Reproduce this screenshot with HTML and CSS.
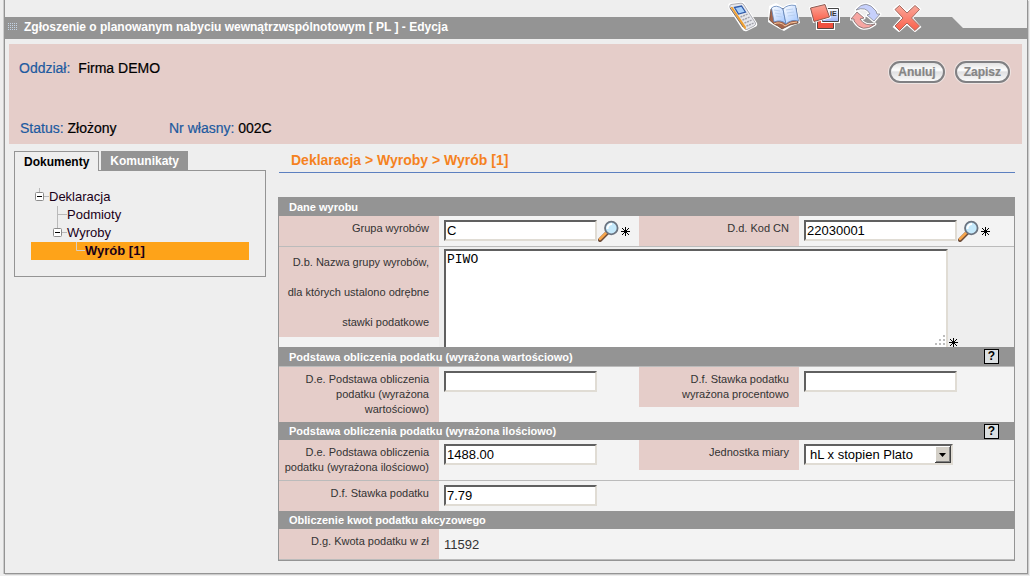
FILE: index.html
```html
<!DOCTYPE html>
<html lang="pl">
<head>
<meta charset="utf-8">
<title>Zgłoszenie o planowanym nabyciu wewnątrzwspólnotowym</title>
<link rel="stylesheet" href="styles.css">
</head>
<body>
<svg class="defs" aria-hidden="true">
  <defs>
    <linearGradient id="red" x1="0" y1="0" x2="0" y2="1"><stop offset="0" stop-color="#f9a79a"/><stop offset="1" stop-color="#fb5f4a"/></linearGradient>
    <linearGradient id="blue" x1="0" y1="0" x2="0" y2="1"><stop offset="0" stop-color="#fff"/><stop offset="1" stop-color="#9db2f6"/></linearGradient>
    <linearGradient id="page" x1="0" y1="0" x2="1" y2="1"><stop offset="0" stop-color="#fff"/><stop offset="1" stop-color="#9fc4ff"/></linearGradient>
    <symbol id="lens" viewBox="0 0 22 22">
      <path d="M9 13 L2 20" stroke="#6a4a38" stroke-width="4" stroke-linecap="round"/>
      <path d="M8 13 L2 19" stroke="#f6a54c" stroke-width="2.5" stroke-linecap="round"/>
      <circle cx="13.300" cy="8" r="6.300" fill="#c5e9fb" stroke="#6c7480" stroke-width="1.800"/>
      <path d="M9.500 9 A4.500 4.500 0 0 1 14 4" fill="none" stroke="#fff" stroke-width="2"/>
    </symbol>
    <symbol id="star" viewBox="0 0 9 9">
      <path d="M4.500 0V9M0 4.500H9M1 1L8 8M8 1L1 8" stroke="#000" stroke-width="1"/>
    </symbol>
  </defs>
</svg>
<div class="window">
  <header class="titlebar">
    <svg class="grip" viewBox="0 0 10 8" aria-hidden="true"><path d="M0 .5H10M0 2.500H10M0 4.500H10M0 6.500H10" stroke="#c3d3e4" stroke-dasharray="1 1"/></svg>
    <h1 class="title">Zgłoszenie o planowanym nabyciu wewnątrzwspólnotowym [ PL ] - Edycja</h1>
    <nav class="tools">
      <button class="tool" type="button" aria-label="Telefon"><svg viewBox="0 0 32 32">
        <path d="M3 3 L14 2 Q17 1 18 4 L30 23 Q31 26 28 27 L20 31 Q17 32 15 29 L2 9 Q0 4 3 3Z" fill="#fff"/>
        <path d="M4 4.500 L14 3.200 Q16 3 17 5 L28.500 23 Q29 25 27 26 L20 29.500 Q18 30 17 28 L3 8 Q2 5 4 4.500Z" fill="#e6e7ec" stroke="#9b9ba2" stroke-width=".8"/>
        <path d="M3.500 7 L5.500 7 L19 27 L18.500 29.500 L16.500 27.500Z" fill="#f0a030"/><path d="M3.200 8 L16 27" stroke="#6b5648" stroke-width=".7"/>
        <path d="M7.500 7.500 L14.500 6 L18.500 12 L11.500 14Z" fill="#a9d0fa" stroke="#315ba9" stroke-width="1.300"/>
        <path d="M13.500 17 L21 14M15.500 20 L23 17M17.500 23 L25 20M19.500 26 L27 23" stroke="#a2a3ac" stroke-width="1.500" stroke-dasharray="2 .8"/>
      </svg></button>
      <button class="tool" type="button" aria-label="Instrukcja"><svg viewBox="0 0 32 32">
        <path d="M1 6 L8 3 L15 7 L20 4 L28 3 L32 23 L24 26 L16 31 L10 28 L0 22Z" fill="#fff"/>
        <path d="M3 9 L1.500 20 L6 24 L10 26 L14 29 L22 25 L30 23 L28 8Z" fill="#a7654b" stroke="#65473a" stroke-width=".8"/>
        <path d="M3.500 8 Q8 4 15 9 L18 24 Q13 19 6 22Z" fill="url(#page)" stroke="#5e83b8" stroke-width=".8"/>
        <path d="M15 9 Q20 4 27.500 5.500 L30.500 21 Q23 19 18 24Z" fill="url(#page)" stroke="#5e83b8" stroke-width=".8"/>
        <path d="M6 10 L12 11M7 13 L13 14M8 16 L14 17M18 10 L25 9M19 13 L26 12M20 16 L27 15" stroke="#b6cdec" stroke-width=".8"/>
        <path d="M6 24 Q12 21 17 26 Q22 22 29 22" fill="none" stroke="#f6c9a0"/>
      </svg></button>
      <button class="tool" type="button" aria-label="IE"><svg viewBox="0 0 32 32">
        <path d="M7 17H26V30H7Z" fill="#fff"/><path d="M8.500 18.500H24.500V28.500H8.500Z" fill="#f1503f" stroke="#5b4340"/>
        <path d="M12 7H31V23H12Z" fill="#fff"/><path d="M13.500 8.500H29.500V21.500H13.500Z" fill="url(#blue)" stroke="#444"/>
        <text class="icon-text" x="21" y="16">IE</text>
        <path d="M0 7 L17 3 L22 18 L4 23Z" fill="#fff"/><path d="M1.500 8 L16 4.500 L20.500 17 L5 21.500Z" fill="url(#red)" stroke="#8a5a52"/>
      </svg></button>
      <button class="tool" type="button" aria-label="Odśwież"><svg viewBox="0 0 32 32">
        <g stroke="#fff" stroke-width="3" stroke-linejoin="round" fill="#fff"><path d="M6 10 Q16 -2 26 11 L26 14 L30 14 L24 21 L17 15 L20 14 Q16 6 6 10Z"/><path d="M25 24 Q12 34 4 21 L4 19 L1 19 L7 12 L14 18 L10 19 Q15 27 25 24Z"/></g>
        <path d="M6 10 Q16 -2 26 11 L27 14 L30 14 L24 21 L17 15 L20 14 Q16 6 6 10Z" fill="#c6d0fc" stroke="#85868e" stroke-width=".8"/>
        <path d="M25 24 Q12 34 4 21 L4 19 L1 19 L7 12 L14 18 L10 19 Q15 27 25 24Z" fill="#f7a6a2" stroke="#7b6c6c" stroke-width=".8"/>
      </svg></button>
      <button class="tool" type="button" aria-label="Zamknij"><svg viewBox="0 0 32 32">
        <path d="M3 9 L8 5 L16 12 L24 5 L29 9 L21 18 L29 27 L24 31 L16 24 L8 31 L3 27 L11 18Z" fill="#fff" stroke="#fff" stroke-width="2"/>
        <path d="M4 9.500 L8.500 5.500 L16 13 L24 5.500 L28.500 9.500 L20.500 18 L28.500 26 L24 30.500 L16 23 L8.500 30.500 L4 26 L12 18Z" fill="url(#red)" stroke="#a06a60"/>
      </svg></button>
    </nav>
  </header>

  <section class="summary">
    <div class="summary-row">
      <span class="key">Oddział:</span><span class="company">Firma DEMO</span>
      <div class="actions"><button class="pill" type="button">Anuluj</button><button class="pill" type="button">Zapisz</button></div>
    </div>
    <div class="summary-row status">
      <span class="status-item"><span class="key">Status:</span> Złożony</span>
      <span><span class="key">Nr własny:</span> 002C</span>
    </div>
  </section>

  <div class="body">
    <aside class="side">
      <div class="tabs"><button class="tab active" type="button">Dokumenty</button><button class="tab" type="button">Komunikaty</button></div>
      <ul class="tree">
        <li class="node"><svg class="branch" viewBox="0 0 18 18"><path d="M8.500 0V5M13 8.500H18" stroke="#b9b9b9"/><rect x="4.500" y="4.500" width="8" height="8" rx="1" fill="#fff" stroke="#8c8c8c"/><path d="M6 8.500H11" stroke="#000"/></svg><a href="#">Deklaracja</a></li>
        <li class="node level1"><svg class="branch" viewBox="0 0 18 18"><path d="M8.500 0V18M8.500 8.500H18" stroke="#b9b9b9"/></svg><a href="#">Podmioty</a></li>
        <li class="node level1"><svg class="branch" viewBox="0 0 18 18"><path d="M8.500 0V5M13 8.500H18" stroke="#b9b9b9"/><rect x="4.500" y="4.500" width="8" height="8" rx="1" fill="#fff" stroke="#8c8c8c"/><path d="M6 8.500H11" stroke="#000"/></svg><a href="#">Wyroby</a></li>
        <li class="node level2 current"><svg class="branch" viewBox="0 0 18 18"><path d="M9.500 0V8.500H18" fill="none" stroke="#d8d0c4"/></svg><a href="#">Wyrób [1]</a></li>
      </ul>
    </aside>

    <main class="main">
      <h2 class="crumbs">Deklaracja &gt; Wyroby &gt; Wyrób [1]</h2>
      <form class="panel">
        <h3 class="bar">Dane wyrobu</h3>
        <div class="row">
          <label class="label" for="group">Grupa wyrobów</label>
          <div class="field"><input class="text" id="group" value="C"><svg class="lens"><use href="#lens"/></svg><svg class="star"><use href="#star"/></svg></div>
          <label class="label" for="cn">D.d. Kod CN</label>
          <div class="field"><input class="text" id="cn" value="22030001"><svg class="lens"><use href="#lens"/></svg><svg class="star"><use href="#star"/></svg></div>
        </div>
        <div class="row ruled">
          <label class="label spaced" for="name">D.b. Nazwa grupy wyrobów,<br>dla których ustalono odrębne<br>stawki podatkowe</label>
          <div class="field wide">
            <div class="area-wrap"><textarea class="area" id="name">PIWO</textarea><svg class="resizer" viewBox="0 0 12 12"><path d="M9 0H11V2H9ZM9 4H11V6H9ZM5 4H7V6H5ZM9 8H11V10H9ZM5 8H7V10H5ZM1 8H3V10H1Z" fill="#bdbdbd"/></svg></div>
            <svg class="star"><use href="#star"/></svg>
          </div>
        </div>
        <h3 class="bar tall">Podstawa obliczenia podatku (wyrażona wartościowo)<button class="help" type="button">?</button></h3>
        <div class="row ruled">
          <label class="label" for="base-value">D.e. Podstawa obliczenia podatku (wyrażona wartościowo)</label>
          <div class="field"><input class="text" id="base-value"></div>
          <label class="label" for="rate-percent">D.f. Stawka podatku<br>wyrażona procentowo</label>
          <div class="field"><input class="text" id="rate-percent"></div>
        </div>
        <h3 class="bar">Podstawa obliczenia podatku (wyrażona ilościowo)<button class="help" type="button">?</button></h3>
        <div class="row">
          <label class="label" for="base-qty">D.e. Podstawa obliczenia podatku (wyrażona ilościowo)</label>
          <div class="field"><input class="text" id="base-qty" value="1488.00"></div>
          <label class="label" for="unit">Jednostka miary</label>
          <div class="field"><div class="select-wrap"><select class="select" id="unit"><option>hL x stopien Plato</option></select><svg class="arrow" viewBox="0 0 16 17"><path d="M0 0H16V17H0Z" fill="#404040"/><path d="M0 0H15V16H0Z" fill="#fff"/><path d="M1 1H15V16H1Z" fill="#808080"/><path d="M1 1H14V15H1Z" fill="#d4d0c8"/><path d="M4 7H11L7.500 11Z" fill="#000"/></svg></div></div>
        </div>
        <div class="row ruled">
          <label class="label" for="rate">D.f. Stawka podatku</label>
          <div class="field"><input class="text" id="rate" value="7.79"></div>
        </div>
        <h3 class="bar">Obliczenie kwot podatku akcyzowego</h3>
        <div class="row last">
          <label class="label" for="amount">D.g. Kwota podatku w zł</label>
          <div class="field"><output class="amount" id="amount">11592</output></div>
        </div>
      </form>
    </main>
  </div>
</div>
</body>
</html>
```
FILE: styles.css
```css
* { box-sizing: border-box; }
body {
  margin: 0;
  background: #eee;
  color: #000;
  font: 12px/15px "Liberation Sans", Arial, sans-serif;
}
h1, h2, h3, ul { margin: 0; padding: 0; }
button, input, select, textarea { font-family: inherit; margin: 0; }
.defs { position: absolute; width: 0; height: 0; }

.window {
  margin: 0 2px 2px 4px;
  border: 1px solid #949494;
  border-top: 0;
  box-shadow: -1px 0 #ccc, 1px 1px #ccc;
}

.titlebar {
  position: relative;
  display: flex;
  align-items: flex-start;
  height: 39px;
  padding: 0 104px 0 3px;
}
.titlebar::before {
  content: "";
  position: absolute;
  inset: 17px 0 0 -1px;
  background: #949494;
  clip-path: polygon(0 0, calc(100% - 75px) 0, calc(100% - 64px) 11px, 100% 11px, 100% 100%, 0 100%);
}
.grip { position: relative; width: 10px; height: 8px; margin: 23px 6px 0 0; }
.title {
  position: relative;
  flex: 1;
  padding-top: 20px;
  color: #fff;
  font-size: 12px;
  line-height: 15px;
  white-space: nowrap;
}
.tools { position: relative; display: flex; gap: 9px; }
.tool { width: 32px; height: 32px; padding: 0; border: 0; background: none; }
.tool svg { display: block; width: 32px; height: 32px; }
.icon-text { font: bold 7px "Liberation Sans", Arial, sans-serif; fill: #333; }

.summary {
  display: flex;
  flex-direction: column;
  justify-content: space-between;
  height: 100px;
  margin: 5px 5px 0 4px;
  padding: 16px 12px 7px 10px;
  background: #e5cdc9;
  font-size: 14px;
  line-height: 17px;
  -webkit-text-stroke: 0.2px;
}
.summary-row { display: flex; align-items: flex-start; height: 17px; }
.key { color: #1d5aa0; }
.company { margin-left: 8px; }
.status-item { width: 150px; padding-left: 1px; }
.actions { display: flex; gap: 10px; margin-left: auto; padding-top: 1px; }
.pill {
  height: 22px;
  padding: 0 7px;
  border: 2px solid #808083;
  border-radius: 11px;
  box-shadow: 0 0 0 1px #eee5e3;
  background: linear-gradient(#e2e2e2, #fff 40%, #e0e0e2 50%, #fafafa);
  color: #858585;
  font-size: 12px;
  font-weight: bold;
}

.body { display: flex; gap: 12px; padding: 7px 12px 12px 9px; }
.side { flex: 0 0 252px; }
.tabs { display: flex; gap: 2px; height: 19px; }
.tab {
  height: 19px;
  padding: 0 9px;
  border: 0;
  background: #949494;
  color: #fff;
  font-size: 12px;
  font-weight: bold;
}
.tab.active {
  position: relative;
  height: 20px;
  border: 1px solid #949494;
  border-bottom: 0;
  background: #eee;
  color: #000;
}
.tree {
  min-height: 107px;
  padding: 17px 16px 16px;
  border: 1px solid #949494;
  list-style: none;
}
.node { display: flex; align-items: center; height: 18px; }
.node a { color: #1a0018; text-decoration: none; font-size: 13px; line-height: 18px; }
.branch { flex: none; width: 18px; height: 18px; }
.level1 { padding-left: 18px; }
.level2 { padding-left: 36px; }
.current { background: #fea319; }
.current a { font-weight: bold; }

.main { flex: 1; min-width: 0; }
.crumbs {
  margin: 0 0 24px 1px;
  padding: 1px 12px 3px;
  border-bottom: 1px solid #5c80c0;
  color: #f5821f;
  font-size: 14px;
  line-height: 17px;
}
.panel { border: 1px solid #949494; background: #f3f3f3; }
.bar {
  display: flex;
  justify-content: space-between;
  align-items: center;
  height: 18px;
  padding: 0 15px 0 10px;
  background: #949494;
  color: #fff;
  font-size: 11px;
  line-height: 18px;
}
.bar.tall { height: 19px; }
.help {
  width: 15px;
  height: 15px;
  padding: 0;
  border: 1px solid #000;
  background: #dce0e2;
  color: #000;
  font-size: 12px;
  font-weight: bold;
  line-height: 13px;
}
.row {
  display: grid;
  grid-template-columns: 160px 200fr 160px 215fr;
  min-height: 30px;
}
.row.ruled { border-top: 1px solid #bbb; }
.row.last { border-bottom: 1px solid #bbb; }
.label {
  min-height: 30px;
  padding: 5px 10px 5px 0;
  background: #e5cdc9;
  color: #333;
  font-size: 11px;
  line-height: 15px;
  text-align: right;
}
.label:nth-of-type(2), .label.spaced { align-self: start; }
.label.spaced { padding-top: 0; padding-bottom: 0; line-height: 30px; white-space: nowrap; }
.field { display: flex; align-items: flex-start; padding: 4px 0 0 5px; }
.field.wide { grid-column: 2 / -1; align-items: flex-end; padding: 2px 56px 0 5px; background: #eee; }
.text, .area, .select {
  border: 2px solid;
  border-color: #606060 #e0dcd4 #e0dcd4 #606060;
  border-radius: 0;
  background: #fff;
  color: #000;
}
.text { width: 153px; height: 21px; padding: 0 1px; font-size: 13px; }
.lens { width: 22px; height: 22px; margin-left: 1px; }
.star { flex: none; width: 9px; height: 9px; margin: 7px 0 0 1px; }
.field .star { align-self: flex-start; }
.field.wide .star { align-self: flex-end; }
.area-wrap { position: relative; flex: 1; height: 98px; }
.area {
  display: block;
  width: 100%;
  height: 98px;
  padding: 1px;
  border-bottom: 0;
  resize: none;
  font: 13px/16px "Liberation Mono", monospace;
}
.resizer { position: absolute; right: 2px; bottom: 0; width: 12px; height: 12px; }
.select-wrap { position: relative; }
.select { width: 149px; height: 21px; padding: 0 18px 0 4px; appearance: none; font-size: 13px; }
.arrow { position: absolute; top: 2px; right: 2px; width: 16px; height: 17px; pointer-events: none; }
.amount { padding-top: 3px; color: #333; font-size: 13px; line-height: 17px; }
```
